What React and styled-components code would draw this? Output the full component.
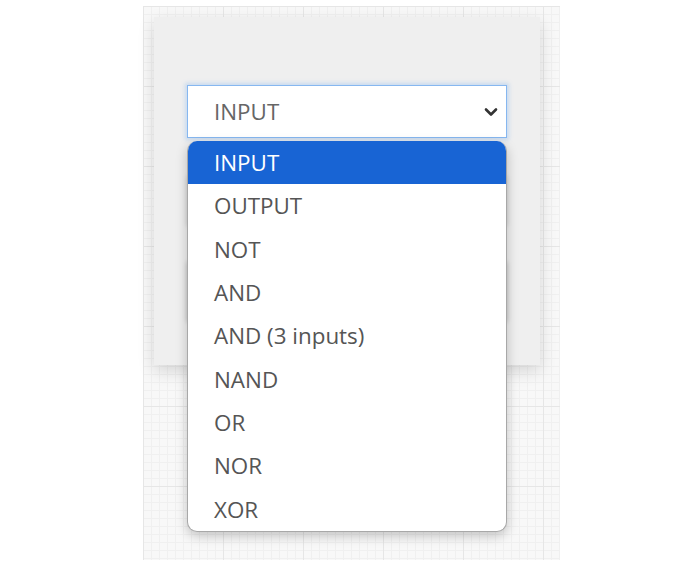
import styled, { createGlobalStyle } from "styled-components";

const GlobalStyle = createGlobalStyle`
    html, body {
        margin: 0;
        padding: 0;
        background: #ffffff;
        font-family: "Open Sans", "Liberation Sans", sans-serif;
    }
`;

const options = ["INPUT", "OUTPUT", "NOT", "AND", "AND (3 inputs)", "NAND", "OR", "NOR", "XOR"];

function Chevron() {
    return (
        <svg width="14" height="10" viewBox="0 0 14 10">
            <path d="M2 2.5 L7 7.5 L12 2.5" fill="none" stroke="#333" strokeWidth="2.6" strokeLinecap="round" strokeLinejoin="round"/>
        </svg>
    );
}

function App() {
    const selected = "INPUT";
    return (
        <>
            <GlobalStyle/>
            <Canvas>
                <Panel>
                    <Select>
                        <SelectText>{selected}</SelectText>
                        <Chevron/>
                    </Select>
                    <Field/>
                    <Button/>
                    <Menu>
                        {options.map(o => (
                            <Option key={o} active={o === selected}>{o}</Option>
                        ))}
                    </Menu>
                </Panel>
            </Canvas>
        </>
    );
}

export default App;

const Canvas = styled.div`
    margin: 6px 0 0 143px;
    width: 417px;
    height: 554px;
    padding: 11px;
    box-sizing: border-box;
    background-color: #f8f8f8;
    background-image:
        linear-gradient(to right, #e6e6e6 1px, transparent 1px),
        linear-gradient(to bottom, #e6e6e6 1px, transparent 1px),
        linear-gradient(to right, #f0f0f0 1px, transparent 1px),
        linear-gradient(to bottom, #f0f0f0 1px, transparent 1px);
    background-size: 80px 80px, 80px 80px, 8px 8px, 8px 8px;
`;
const Panel = styled.div`
    position: relative;
    display: flex;
    flex-direction: column;
    gap: 36px;
    width: 386px;
    height: 348px;
    padding: 68px 33px 0;
    box-sizing: border-box;
    background: #efefef;
    box-shadow: 0 6px 16px rgba(0, 0, 0, 0.14);
`;
const Select = styled.div`
    display: flex;
    align-items: center;
    justify-content: space-between;
    height: 53px;
    padding: 0 8px 0 26px;
    box-sizing: border-box;
    background: #ffffff;
    border: 1px solid #86b7f0;
    box-shadow: 0 0 4px 2px rgba(110, 170, 240, 0.3);
`;
const SelectText = styled.span`
    font-size: 22.4px;
    color: #666666;
`;
const Field = styled.div`
    height: 50px;
    background: #e6e6e6;
    box-shadow: 0 2px 5px rgba(0, 0, 0, 0.15);
`;
const Button = styled.div`
    height: 60px;
    background: #e3e3e3;
    box-shadow: 0 2px 5px rgba(0, 0, 0, 0.2);
`;
const Menu = styled.div`
    position: absolute;
    top: 124px;
    left: 33px;
    width: 318px;
    display: flex;
    flex-direction: column;
    background: #ffffff;
    border: 1px solid #a8a8a8;
    border-top: none;
    border-radius: 10px;
    overflow: hidden;
    box-shadow: 0 4px 12px rgba(0, 0, 0, 0.22);
`;
const Option = styled.div`
    height: 43.3px;
    display: flex;
    align-items: center;
    padding-left: 26px;
    font-size: 22.4px;
    color: ${props => props.active ? "#ffffff" : "#555555"};
    background: ${props => props.active ? "#1864d4" : "transparent"};
`;
